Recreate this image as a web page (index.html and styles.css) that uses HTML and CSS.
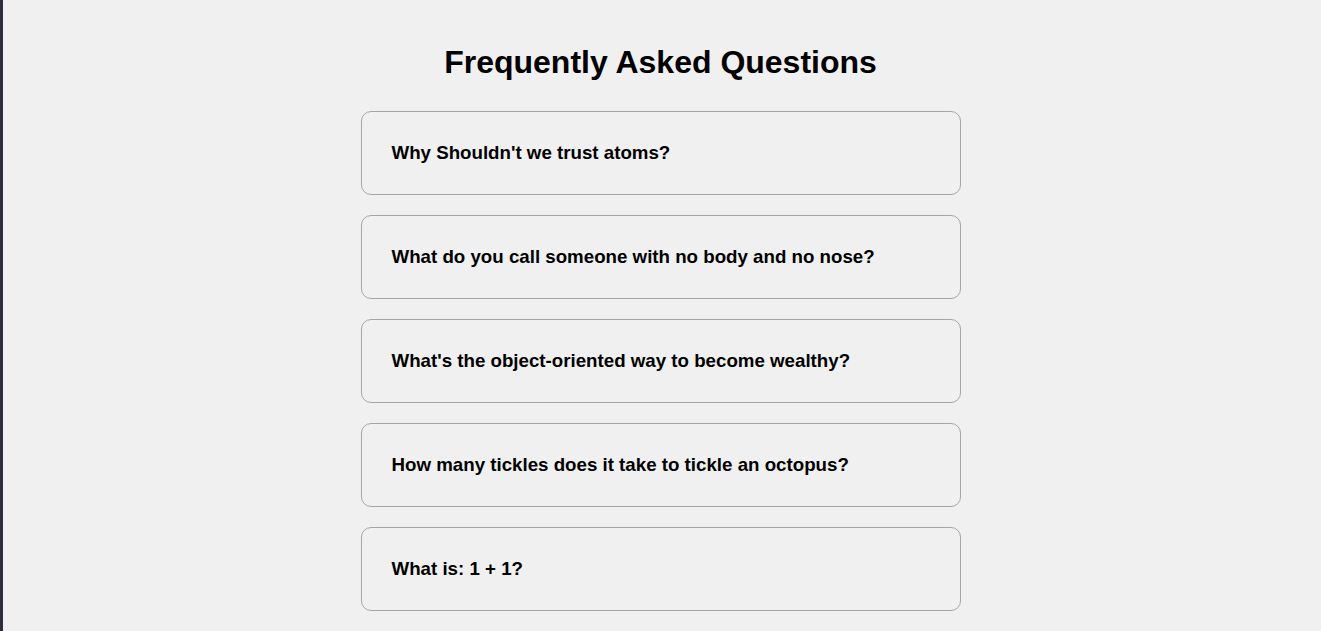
FILE: index.html
```html
<!DOCTYPE html>
<html lang="en">
<head>
<meta charset="utf-8">
<title>FAQ</title>
<link rel="stylesheet" href="styles.css">
</head>
<body>
<main class="faq">
  <h1 class="faq-title">Frequently Asked Questions</h1>
  <div class="faq-list">
    <div class="faq-item">Why Shouldn't we trust atoms?</div>
    <div class="faq-item">What do you call someone with no body and no nose?</div>
    <div class="faq-item">What's the object-oriented way to become wealthy?</div>
    <div class="faq-item">How many tickles does it take to tickle an octopus?</div>
    <div class="faq-item">What is: 1 + 1?</div>
  </div>
</main>
</body>
</html>
```

FILE: styles.css
```css
html {
  background: linear-gradient(to right, #2b2d3a 0, #2b2d3a 3px, #f0f0f0 3px);
  min-height: 100%;
}

body {
  margin: 0;
  font-family: "Liberation Sans", Arial, sans-serif;
  color: #000;
}

.faq {
  display: flex;
  flex-direction: column;
  align-items: center;
  padding-top: 44px;
}

.faq-title {
  margin: 0 0 30px;
  font-size: 32px;
  line-height: 37px;
  font-weight: 700;
  text-align: center;
}

.faq-list {
  display: flex;
  flex-direction: column;
  gap: 20px;
  width: 600px;
}

.faq-item {
  box-sizing: border-box;
  border: 1px solid #a3a6aa;
  border-radius: 10px;
  padding: 30px 30px;
  font-size: 18.72px;
  line-height: 22px;
  font-weight: 700;
}
```
